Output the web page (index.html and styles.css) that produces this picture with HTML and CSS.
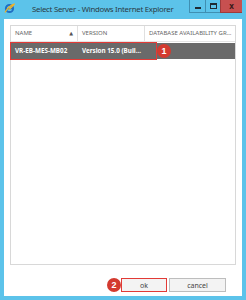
FILE: index.html
```html
<!DOCTYPE html>
<html>
<head>
<meta charset="utf-8">
<link rel="stylesheet" href="styles.css">
</head>
<body>
<div class="window">
  <div class="titlebar">
    <svg class="ie" width="11" height="11" viewBox="0 0 11 11">
      <circle cx="5.5" cy="5.5" r="3.6" fill="none" stroke="#1f6fc4" stroke-width="2"/>
      <rect x="2.5" y="5" width="6.5" height="1.3" fill="#1f6fc4"/>
      <path d="M1 9.5 C3 6 7 2 10.3 1.2 C9 3 7 5 5 6.5" fill="none" stroke="#f2b324" stroke-width="1.2"/>
    </svg>
    <div class="title">Select Server - Windows Internet Explorer</div>
    <div class="controls">
      <div class="ctl min"><span class="bar"></span></div>
      <div class="ctl max"><span class="box"></span></div>
      <div class="ctl close">x</div>
    </div>
  </div>
  <div class="client">
    <div class="grid">
      <div class="head">
        <div class="col c1">NAME <span class="arrow">▲</span></div>
        <div class="col c2">VERSION</div>
        <div class="col c3">DATABASE AVAILABILITY GR...</div>
      </div>
      <div class="row sel">
        <div class="cell c1">VR-EB-MES-MB02</div>
        <div class="cell c2">Version 15.0 (Buil...</div>
        <div class="mark"></div>
        <div class="badge b1">1</div>
      </div>
    </div>
    <div class="buttons">
      <div class="btn ok">ok<div class="badge b2">2</div></div>
      <div class="btn cancel">cancel</div>
    </div>
  </div>
</div>
</body>
</html>
```
FILE: styles.css
```css
html, body { margin: 0; padding: 0; }
body {
  width: 246px; height: 300px; overflow: hidden;
  background: #5cc3ea;
  font-family: "Noto Sans", "DejaVu Sans", sans-serif;
}
.window { display: flex; flex-direction: column; height: 300px; }
.titlebar {
  height: 19px; display: flex; align-items: flex-start; position: relative;
}
.ie { margin: 3px 0 0 4px; flex: none; }
.title {
  font-size: 7.8px; letter-spacing: -0.25px; color: #2b3a44; margin: 3px 0 0 17px;
  white-space: nowrap; line-height: 12px; flex: none;
}
.controls { display: flex; margin-left: auto; margin-right: 4px; flex: none; }
.ctl {
  height: 12px; display: flex; align-items: center; justify-content: center;
  border-left: 1px solid #3f8fb2; border-bottom: 1px solid #3f8fb2;
}
.min { width: 15px; }
.max { width: 14px; }
.close { width: 21px; background: #c75050; color: #3a1a1a; font-size: 8px; font-weight: bold; border-color: #9e3b3b; line-height: 10px; }
.bar { width: 6px; height: 2px; background: #1f2a33; margin-top: 3px; }
.box { width: 5px; height: 3px; border: 1px solid #1f2a33; border-top-width: 2px; }
.client {
  flex: 1; background: #fff; margin: 0 4px 4px 4px;
  display: flex; flex-direction: column;
}
.grid {
  margin: 6px 6px 0 6px; height: 240px; border: 1px solid #d8d8d8;
  box-sizing: border-box; position: relative;
}
.head { display: flex; height: 15px; border-bottom: 1px solid #e4e4e4; }
.col {
  font-size: 6px; color: #666; line-height: 15px; padding-left: 4px;
  box-sizing: border-box; white-space: nowrap;
}
.head .c1 { width: 67px; border-right: 1px solid #e0e0e0; display: flex; }
.head .c2 { width: 67px; border-right: 1px solid #e0e0e0; }
.head .c3 { flex: 1; }
.arrow { margin-left: auto; margin-right: 4px; font-size: 5px; color: #555; }
.row {
  display: flex; height: 16px; margin-top: 1px; position: relative;
}
.sel { background: #6a6a6a; }
.cell {
  font-size: 6.3px; font-weight: bold; color: #fff; line-height: 16px;
  padding-left: 4px; box-sizing: border-box; white-space: nowrap;
}
.row .c1 { width: 67px; }
.row .c2 { width: 70px; }
.mark {
  position: absolute; left: -1px; top: -1px; width: 147px; height: 18px;
  border: 1.5px solid #e23a36; box-sizing: border-box;
}
.badge {
  position: absolute; width: 14px; height: 14px; border-radius: 50%;
  background: #d33a2f; color: #fff; font-size: 9px; font-weight: bold;
  display: flex; align-items: center; justify-content: center;
  font-family: "Liberation Sans", sans-serif;
}
.b1 { left: 146px; top: 1px; }
.buttons {
  display: flex; justify-content: flex-end; gap: 2px;
  margin: 13px 16px 0 0;
}
.btn {
  height: 14px; box-sizing: border-box; border: 1px solid #bdbdbd;
  background: #f3f3f3; font-size: 7px; color: #444;
  display: flex; align-items: center; justify-content: center; position: relative;
}
.ok { width: 46px; border: 1.5px solid #e23a36; }
.cancel { width: 57px; }
.b2 { left: -15px; top: -1.5px; }
```
